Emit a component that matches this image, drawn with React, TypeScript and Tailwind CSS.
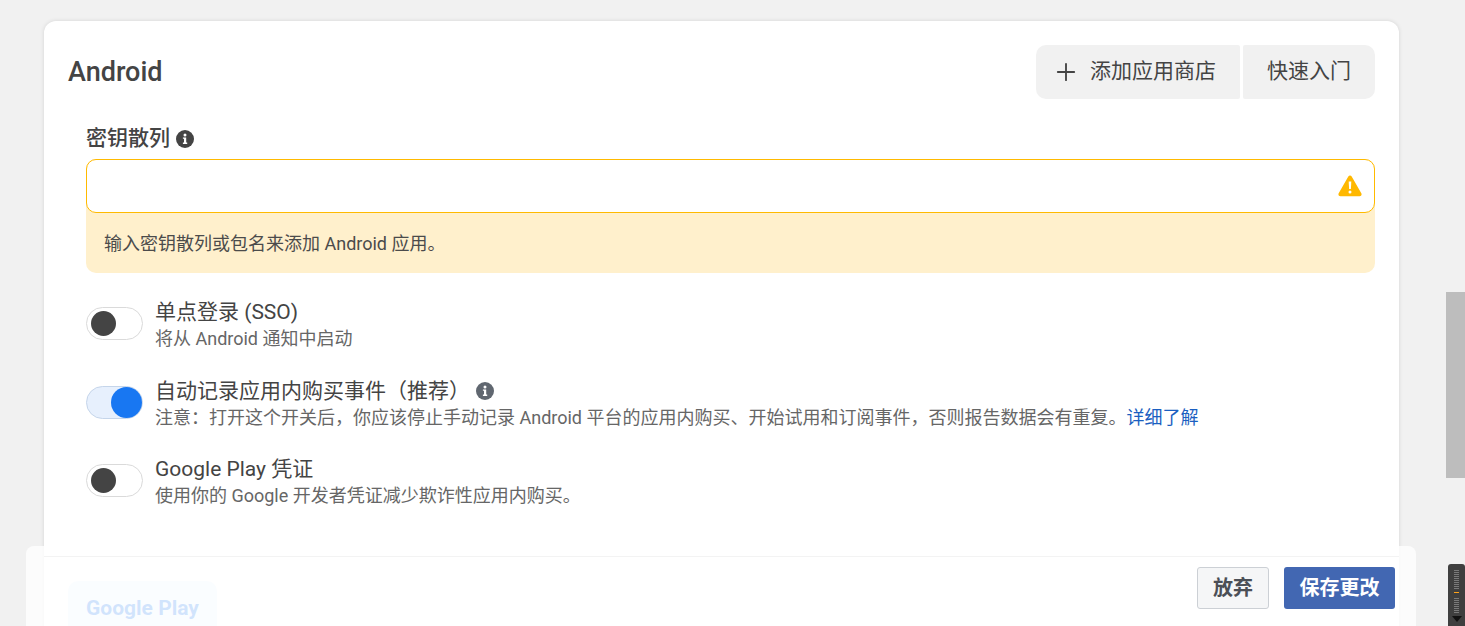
import { Plus } from "lucide-react";

const cjk = "font-['Roboto','Noto_Sans_CJK_SC',sans-serif]";

function InfoIcon({ className }: { className: string }) {
  return (
    <svg viewBox="0 0 18 18" className={className}>
      <circle cx="9" cy="9" r="9" fill="currentColor" />
      <circle cx="9" cy="4.9" r="1.5" fill="#fff" />
      <path d="M6.9 7.4h3.3v5.2h1v1.3H6.9v-1.3h1.1V8.7H6.9z" fill="#fff" />
    </svg>
  );
}

function WarningIcon() {
  return (
    <svg viewBox="0 0 24 22" className="h-[22px] w-[24px]">
      <path
        d="M10.3 1.6c.8-1.4 2.6-1.4 3.4 0l9.6 16.6c.8 1.4-.1 3.1-1.7 3.1H2.4c-1.6 0-2.5-1.7-1.7-3.1z"
        fill="#ffb800"
      />
      <path d="M10.7 6.4h2.6l-.4 7.6h-1.8z" fill="#fff" />
      <circle cx="12" cy="16.9" r="1.5" fill="#fff" />
    </svg>
  );
}

function Toggle({ on }: { on?: boolean }) {
  return on ? (
    <div className="mt-[7px] flex h-[33px] w-[57px] shrink-0 items-center justify-end rounded-full border border-[#c5d5ea] bg-[#e7f0fd]">
      <div className="h-[31px] w-[31px] rounded-full bg-[#1877f2]" />
    </div>
  ) : (
    <div className="mt-[7px] flex h-[33px] w-[57px] shrink-0 items-center rounded-full border border-[#dadada] bg-white pl-[4px]">
      <div className="h-[25px] w-[25px] rounded-full bg-[#444444]" />
    </div>
  );
}

function SettingRow({
  title,
  on,
  info,
  children,
}: {
  title: string;
  on?: boolean;
  info?: boolean;
  children: React.ReactNode;
}) {
  return (
    <div className="flex items-start gap-[12px]">
      <Toggle on={on} />
      <div className="min-w-0">
        <div className="flex h-[24px] items-center text-[21px] leading-[24px] text-[#444444]">
          {title}
          {info && <InfoIcon className="ml-[6px] h-[18px] w-[18px] text-[#606770]" />}
        </div>
        <div className="mt-[3px] h-[24px] text-[18px] leading-[24px] text-[#666666]">{children}</div>
      </div>
    </div>
  );
}

export default function App() {
  return (
    <div className={`relative h-[626px] w-[1465px] overflow-hidden bg-[#f1f1f1] pl-[44px] pt-[21px] ${cjk}`}>
      <div className="w-[1355px] rounded-[12px] bg-white pb-[24px] pl-[24px] pr-[24px] pt-[24px] shadow-[0_0_4px_rgba(0,0,0,0.12)]">
        <div className="flex items-center justify-between">
          <h2 className="text-[27px] font-medium leading-[54px] text-[#444444]">Android</h2>
          <div className="flex gap-[3px] text-[21px] text-[#444444]">
            <button className="flex h-[54px] w-[204px] items-center rounded-l-[10px] rounded-r-[2px] bg-[#f1f1f1] pl-[16px]">
              <Plus className="h-[28px] w-[28px]" strokeWidth={1.6} />
              <span className="ml-[10px]">添加应用商店</span>
            </button>
            <button className="h-[54px] w-[132px] rounded-l-[2px] rounded-r-[10px] bg-[#f1f1f1]">快速入门</button>
          </div>
        </div>

        <div className="ml-[18px] mt-[26px]">
          <div className="flex h-[28px] items-center gap-[6px] text-[21px] font-medium text-[#444444]">
            密钥散列
            <InfoIcon className="h-[18px] w-[18px] text-[#444444]" />
          </div>
          <div className="mt-[6px] rounded-[10px] bg-[#fff0cc]">
            <div className="flex h-[54px] items-center justify-end rounded-[10px] border border-[#ffba00] bg-white pr-[12px]">
              <WarningIcon />
            </div>
            <div className="flex h-[60px] items-center pl-[18px] text-[18px] text-[#4b4b4b]">
              输入密钥散列或包名来添加 Android 应用。
            </div>
          </div>

          <div className="mt-[27px] flex flex-col gap-[27px]">
            <div className="pb-px">
              <SettingRow title="单点登录 (SSO)">将从 Android 通知中启动</SettingRow>
            </div>
            <SettingRow title="自动记录应用内购买事件（推荐）" on info>
              注意：打开这个开关后，你应该停止手动记录 Android 平台的应用内购买、开始试用和订阅事件，否则报告数据会有重复。
              <span className="text-[#1b5fc1]">详细了解</span>
            </SettingRow>
            <SettingRow title="Google Play 凭证">使用你的 Google 开发者凭证减少欺诈性应用内购买。</SettingRow>
          </div>
        </div>

        <div className="mt-[73px] flex h-[56px] w-[149px] items-center justify-center rounded-[10px] bg-[#e7f3ff] text-[21px] font-bold text-[#1877f2]">
          Google Play
        </div>
      </div>

      {/* sticky save bar */}
      <div className="absolute left-[26px] top-[546px] h-[80px] w-[1390px] rounded-t-[8px] bg-white/80">
        <div className="absolute left-[18px] right-[17px] top-[10px] border-t border-[#f3f3f3]" />
        <div className="flex justify-end gap-[15px] pr-[21px] pt-[21px]">
          <button className="h-[42px] w-[72px] rounded-[3px] border border-[#ccd0d5] bg-[#f5f6f7] text-[20px] font-bold text-[#4b4f56]">
            放弃
          </button>
          <button className="h-[42px] w-[111px] rounded-[3px] bg-[#4267b2] text-[20px] font-bold text-white">
            保存更改
          </button>
        </div>
      </div>

      {/* page scrollbar thumb */}
      <div className="absolute left-[1446px] top-[292px] h-[186px] w-[19px] bg-[#bdbdbd]" />

      {/* docked widget */}
      <div className="absolute left-[1448px] top-[564px] flex h-[62px] w-[17px] flex-col items-center gap-[2px] rounded-t-[3px] bg-[#3f3f3f] pt-[6px]">
        <div className="h-[20px] w-[5px] bg-[repeating-linear-gradient(#7a7a7a_0_1px,#3f3f3f_1px_2px)]" />
        <div className="h-[1px] w-[5px] bg-[#ffa31a]" />
        <div className="mt-[3px] h-[16px] w-[5px] bg-[repeating-linear-gradient(#7a7a7a_0_1px,#3f3f3f_1px_2px)]" />
        <div className="h-0 w-0 border-x-[5px] border-t-[6px] border-x-transparent border-t-[#111111]" />
      </div>
    </div>
  );
}
